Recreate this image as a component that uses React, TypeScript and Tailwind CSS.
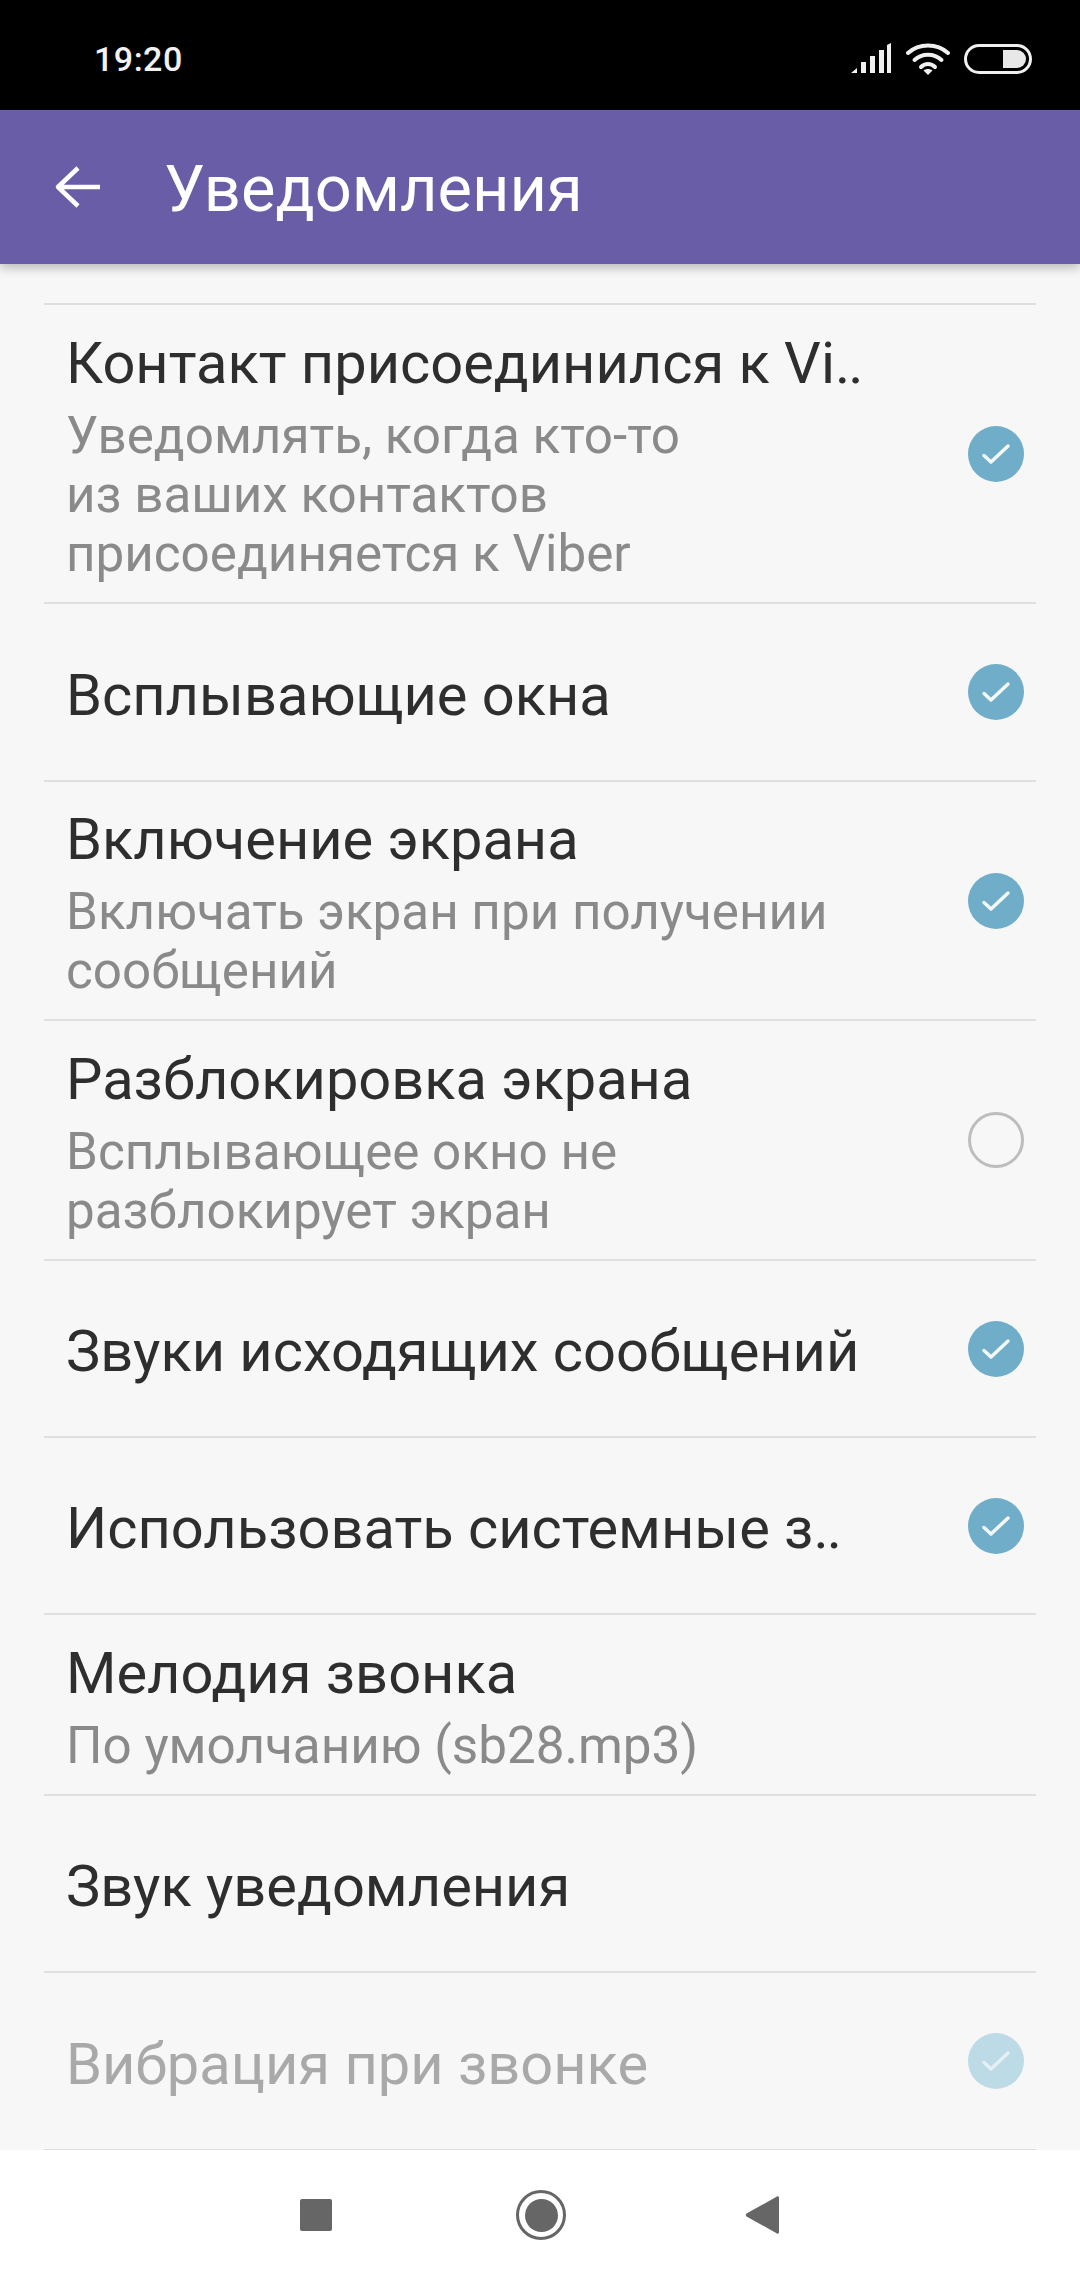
import React from 'react';

type Setting = {
  title: string;
  cut?: boolean; // title was shortened, ends with two tight dots
  lines?: string[];
  check?: 'on' | 'off';
  disabled?: boolean;
  height: string;
};

const settings: Setting[] = [
  {
    title: 'Контакт присоединился к Vi',
    cut: true,
    lines: ['Уведомлять, когда кто-то', 'из ваших контактов', 'присоединяется к Viber'],
    check: 'on',
    height: 'h-[299px]',
  },
  { title: 'Всплывающие окна', check: 'on', height: 'h-[178px]' },
  {
    title: 'Включение экрана',
    lines: ['Включать экран при получении', 'сообщений'],
    check: 'on',
    height: 'h-[239px]',
  },
  {
    title: 'Разблокировка экрана',
    lines: ['Всплывающее окно не', 'разблокирует экран'],
    check: 'off',
    height: 'h-[240px]',
  },
  { title: 'Звуки исходящих сообщений', check: 'on', height: 'h-[177px]' },
  { title: 'Использовать системные з', cut: true, check: 'on', height: 'h-[177px]' },
  { title: 'Мелодия звонка', lines: ['По умолчанию (sb28.mp3)'], height: 'h-[181px]' },
  { title: 'Звук уведомления', height: 'h-[177px]' },
  { title: 'Вибрация при звонке', check: 'on', disabled: true, height: 'h-[178px]' },
];

const CheckMark = ({ state, disabled }: { state: 'on' | 'off'; disabled?: boolean }) => {
  if (state === 'off') {
    return <div className="w-[56px] h-[56px] rounded-full border-[3px] border-[#bdbdbd] shrink-0" />;
  }
  return (
    <div
      className={`w-[56px] h-[56px] rounded-full flex items-center justify-center shrink-0 ${
        disabled ? 'bg-[#bcdbe7]' : 'bg-[#6fadc9]'
      }`}
    >
      <svg width="30" height="24" viewBox="0 0 30 24" fill="none">
        <path
          d="M3 13.5 L10 20 L27 4"
          stroke={disabled ? '#e4f0f5' : '#f4f9fb'}
          strokeWidth="3.5"
          strokeLinecap="round"
          strokeLinejoin="round"
        />
      </svg>
    </div>
  );
};

const SettingRow = ({ item }: { item: Setting }) => (
  <div className={`${item.height} flex items-center border-b-2 border-[#dfdfdf] pl-[22px] pr-[12px]`}>
    <div className="flex-1 min-w-0 pt-[5px]">
      <div
        className={`text-[57.8px] leading-[66px] whitespace-nowrap ${
          item.disabled ? 'text-[#a9a9a9]' : 'text-[#2e2e2e]'
        }`}
      >
        {item.title}
        {item.cut && <span className="tracking-[-2px]">..</span>}
      </div>
      {item.lines && (
        <div className="mt-[10px]">
          {item.lines.map((line) => (
            <div key={line} className="text-[51.2px] leading-[59px] text-[#8a8a8a] whitespace-nowrap">
              {line}
            </div>
          ))}
        </div>
      )}
    </div>
    {item.check && <CheckMark state={item.check} disabled={item.disabled} />}
  </div>
);

const StatusIcons = () => (
  <div className="flex items-center gap-[14px]">
    <svg width="42" height="32" viewBox="0 0 42 32" fill="#f0f0f0">
      <path d="M1 30 L7 25 V30 Z" />
      <rect x="11" y="19" width="5" height="11" />
      <rect x="20" y="13" width="5" height="17" />
      <rect x="29" y="7" width="5" height="23" />
      <path d="M37 2 L41 0 V30 H37 Z" />
    </svg>
    <svg width="44" height="34" viewBox="0 0 44 34" fill="none" stroke="#f0f0f0" strokeWidth="4" strokeLinecap="round">
      <path d="M2 11 C13 1 31 1 42 11" />
      <path d="M8.5 18 C16 11 28 11 35.5 18" />
      <path d="M15 25 C19 21 25 21 29 25" />
      <path d="M22 33 L17.5 28.5 C20 26.5 24 26.5 26.5 28.5 Z" fill="#f0f0f0" stroke="none" />
    </svg>
    <div className="w-[68px] h-[30px] rounded-full border-[3px] border-[#f0f0f0] flex items-center justify-end pr-[3px]">
      <div className="w-[23px] h-[18px] bg-[#e8e8e8] rounded-r-full" />
    </div>
  </div>
);

export default function App() {
  return (
    <div className="w-[1080px] h-[2280px] flex flex-col bg-[#f7f7f7] overflow-hidden font-['Roboto',sans-serif]">
      <div className="h-[110px] bg-black flex items-center justify-between pl-[94px] pr-[48px] pt-[8px] shrink-0 text-white">
        <span className="text-[34px] font-medium tracking-[0.5px] text-[#f2f2f2]">19:20</span>
        <StatusIcons />
      </div>

      <div className="relative z-10 h-[154px] bg-[#695da8] flex items-center shrink-0 shadow-[0_4px_10px_rgba(0,0,0,0.25)]">
        <svg className="ml-[54px] shrink-0" width="47" height="46" viewBox="0 0 47 46" fill="none">
          <path
            d="M46 23 H4 M24 4 L4 23 L24 42"
            stroke="#ffffff"
            strokeWidth="4.5"
            strokeLinejoin="round"
          />
        </svg>
        <span className="ml-[63px] pt-[5px] text-[65px] text-white">Уведомления</span>
      </div>

      <div className="flex-1 min-h-0 pt-[39px] mx-[44px] overflow-hidden">
        <div className="border-t-2 border-[#dfdfdf]">
          {settings.map((item) => (
            <SettingRow key={item.title} item={item} />
          ))}
        </div>
      </div>

      <div className="h-[130px] bg-white flex items-center shrink-0 pl-[300px]">
        <div className="w-[32px] h-[32px] bg-[#666666] rounded-[2px]" />
        <div className="ml-[184px] w-[50px] h-[50px] rounded-full border-[3px] border-[#666666] flex items-center justify-center">
          <div className="w-[33px] h-[33px] rounded-full bg-[#666666]" />
        </div>
        <svg className="ml-[179px]" width="35" height="38" viewBox="0 0 35 38" fill="#666666">
          <path d="M34 2 V36 C34 37.5 33 38 32 37.4 L1.5 20.5 C0.5 19.8 0.5 18.2 1.5 17.5 L32 0.6 C33 0 34 0.5 34 2 Z" />
        </svg>
      </div>
    </div>
  );
}
